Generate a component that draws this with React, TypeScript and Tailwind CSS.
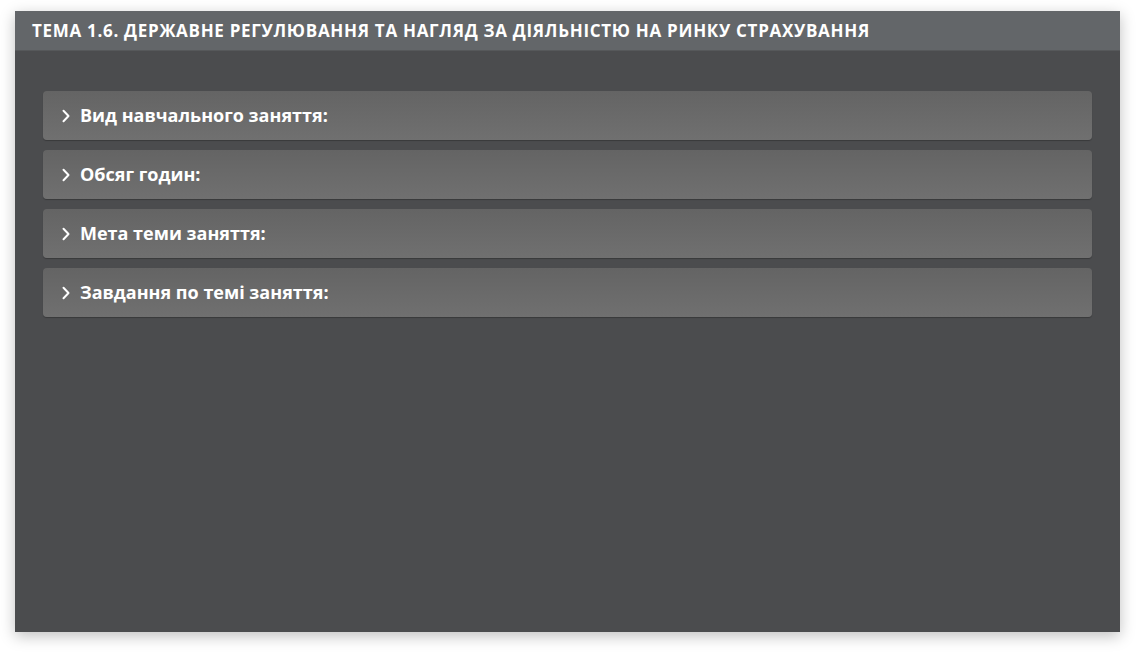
const items = [
  "Вид навчального заняття:",
  "Обсяг годин:",
  "Мета теми заняття:",
  "Завдання по темі заняття:",
];

function Chevron() {
  return (
    <svg width="10" height="14" viewBox="0 0 10 14" fill="none" className="shrink-0">
      <path d="M2.5 1.8 L7.5 7 L2.5 12.2" stroke="white" strokeWidth="2" strokeLinecap="round" strokeLinejoin="round" />
    </svg>
  );
}

export default function App() {
  return (
    <div className="h-[653px] w-[1136px] bg-white pl-[15px] pt-[11px] font-['Open_Sans',sans-serif]">
      <div className="flex h-[621px] w-[1105px] flex-col bg-[#4b4c4e] shadow-[0_4px_14px_rgba(0,0,0,0.25)]">
        <div className="flex h-[40px] items-center border-b border-[#56585a] bg-[#636669] px-[17px]">
          <h1 className="text-[17px] font-bold tracking-[0.7px] text-white">
            ТЕМА 1.6. ДЕРЖАВНЕ РЕГУЛЮВАННЯ ТА НАГЛЯД ЗА ДІЯЛЬНІСТЮ НА РИНКУ СТРАХУВАННЯ
          </h1>
        </div>
        <div className="flex flex-col gap-[10px] px-[28px] pt-[40px]">
          {items.map((t) => (
            <div
              key={t}
              className="flex h-[49px] items-center gap-[9px] rounded-[4px] bg-gradient-to-b from-[#646464] to-[#707070] pl-[18px] pr-[17px] shadow-[0_1px_1px_rgba(0,0,0,0.25)]"
            >
              <Chevron />
              <span className="text-[18px] font-bold text-white">{t}</span>
            </div>
          ))}
        </div>
      </div>
    </div>
  );
}
